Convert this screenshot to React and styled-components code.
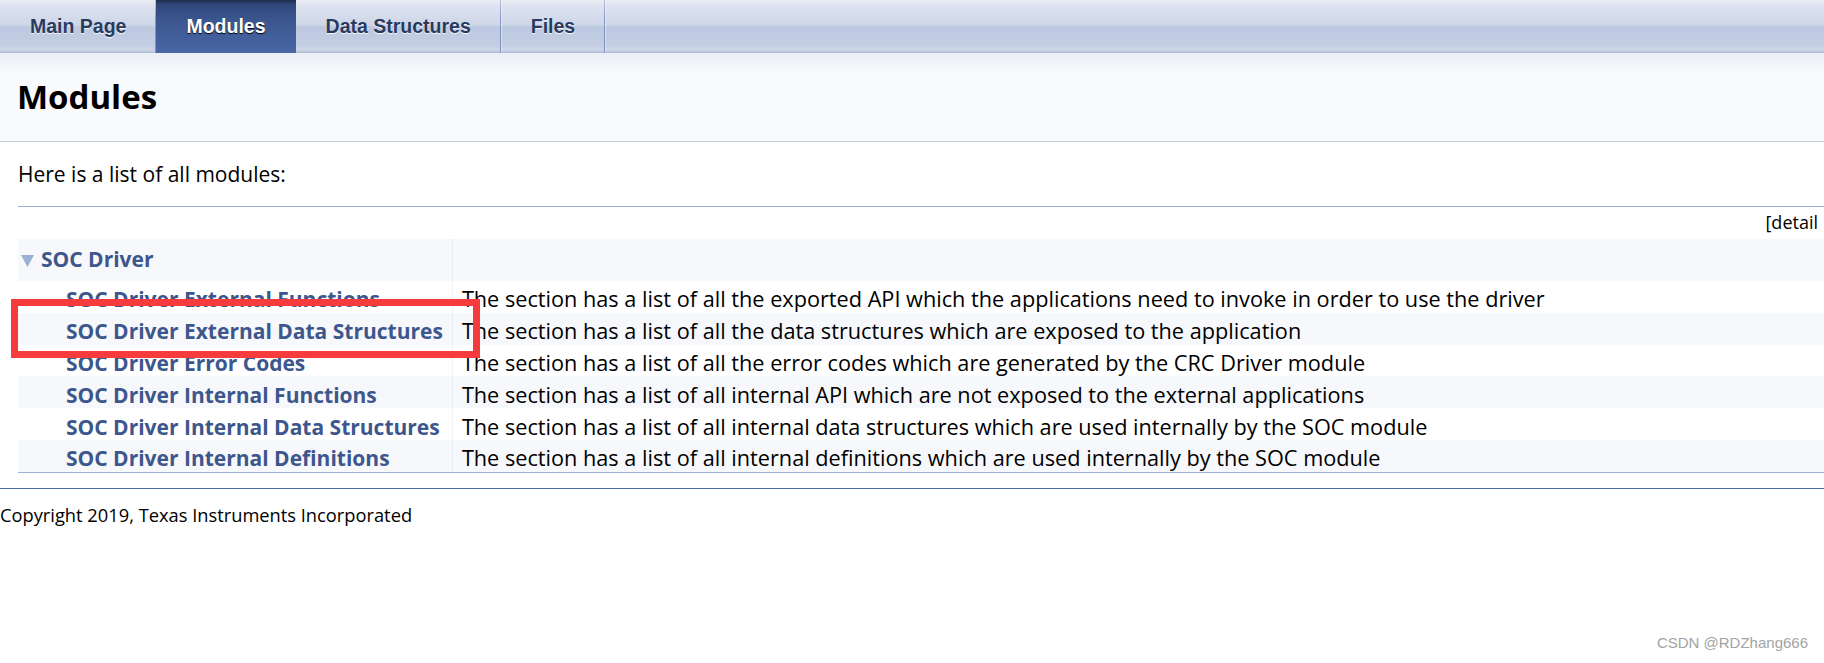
import styled, { createGlobalStyle } from "styled-components";

const GlobalStyle = createGlobalStyle`
  html, body {
    margin: 0;
    padding: 0;
    background: #fff;
  }
  body {
    font-family: "Open Sans", "Noto Sans", sans-serif;
    color: #000;
    overflow: hidden;
  }
`;

const tabs = [
  { label: "Main Page" },
  { label: "Modules", active: true },
  { label: "Data Structures" },
  { label: "Files" },
];

const modules = [
  {
    name: "SOC Driver External Functions",
    desc: "The section has a list of all the exported API which the applications need to invoke in order to use the driver",
  },
  {
    name: "SOC Driver External Data Structures",
    desc: "The section has a list of all the data structures which are exposed to the application",
  },
  {
    name: "SOC Driver Error Codes",
    desc: "The section has a list of all the error codes which are generated by the CRC Driver module",
  },
  {
    name: "SOC Driver Internal Functions",
    desc: "The section has a list of all internal API which are not exposed to the external applications",
  },
  {
    name: "SOC Driver Internal Data Structures",
    desc: "The section has a list of all internal data structures which are used internally by the SOC module",
  },
  {
    name: "SOC Driver Internal Definitions",
    desc: "The section has a list of all internal definitions which are used internally by the SOC module",
  },
];

const App = () => {
  return (
    <Page>
      <GlobalStyle />

      {/* top navigation tabs */}
      <TabBar>
        {tabs.map((t) => (
          <Tab key={t.label} $active={t.active}>
            {t.label}
          </Tab>
        ))}
      </TabBar>

      <Header>
        <Title>Modules</Title>
      </Header>

      <Contents>
        <Intro>Here is a list of all modules:</Intro>
        <Directory>
          <Levels>[detail</Levels>
          <DirTable>
            <tbody>
              <Row $height={42} $even>
                <EntryCell $indent={3} $shift={0}>
                  <EntryInner>
                    <Arrow viewBox="0 0 13 13" width="13" height="13">
                      <polygon points="0,1 13,1 6.5,13" fill="#9CAFD4" />
                    </Arrow>
                    <EntryLink>SOC Driver</EntryLink>
                  </EntryInner>
                </EntryCell>
                <DescCell />
              </Row>
              {modules.map((m, i) => (
                <Row key={m.name} $height={31.8} $even={i % 2 === 1}>
                  <EntryCell $indent={48} $shift={5}>
                    <EntryLink>{m.name}</EntryLink>
                  </EntryCell>
                  <DescCell $shift={5}>{m.desc}</DescCell>
                </Row>
              ))}
            </tbody>
          </DirTable>
        </Directory>
      </Contents>

      <FooterRule />
      <Copyright>Copyright 2019, Texas Instruments Incorporated</Copyright>

      {/* annotation drawn over the screenshot */}
      <Highlight />
      <Watermark>CSDN @RDZhang666</Watermark>
    </Page>
  );
};

export default App;

const Page = styled.div`
  position: relative;
  height: 663px;
  overflow: hidden;
`;

const TabBar = styled.div`
  display: flex;
  height: 53px;
  background: linear-gradient(
    to bottom,
    #e9ecf4 0%,
    #dde3ef 12%,
    #cdd5e7 48%,
    #bdc9e1 50%,
    #c3cde3 85%,
    #cfd7e8 94%,
    #aebbd7 100%
  );
`;

const Tab = styled.div`
  position: relative;
  padding: 0 30px;
  line-height: 53px;
  font-family: "Liberation Sans", Arial, sans-serif;
  font-weight: 700;
  font-size: 19.5px;
  color: ${(p) => (p.$active ? "#fff" : "#283A5D")};
  text-shadow: ${(p) =>
    p.$active ? "0 1px 1px rgba(0,0,0,1)" : "0 1px 1px rgba(255,255,255,0.9)"};
  background: ${(p) =>
    p.$active
      ? "linear-gradient(to bottom, #1f2c4a 0%, #30477a 8%, #3c5790 40%, #4867a5 100%)"
      : "transparent"};

  &::after {
    content: "";
    display: ${(p) => (p.$active ? "none" : "block")};
    position: absolute;
    right: 0;
    top: 0;
    bottom: 0;
    width: 1px;
    background: linear-gradient(to bottom, #b7c2dc 0%, #8597c2 35%, #7b8fbe 100%);
    box-shadow: 1px 0 0 rgba(255, 255, 255, 0.35);
  }
`;

const Header = styled.div`
  height: 89px;
  box-sizing: border-box;
  display: flex;
  align-items: center;
  padding-left: 17px;
  background: linear-gradient(to bottom, #eaeef6 0px, #f9fafc 20px) #f9fafc;
  border-bottom: 1px solid #c4cfe5;
`;

const Title = styled.div`
  font-size: 33px;
  font-weight: 700;
  line-height: 40px;
`;

const Contents = styled.div`
  margin-left: 18px;
`;

const Intro = styled.div`
  margin-top: 18px;
  font-size: 21px;
  line-height: 28px;
`;

const Directory = styled.div`
  margin-top: 18px;
  border-top: 1px solid #9cafd4;
  border-bottom: 1px solid #9cafd4;
`;

const Levels = styled.div`
  text-align: right;
  font-size: 18px;
  line-height: 24px;
  padding: 3px 6px 5px 0;
  white-space: nowrap;
`;

const DirTable = styled.table`
  width: 100%;
  border-collapse: collapse;
  font-size: 21px;
  line-height: 24px;
`;

const Row = styled.tr`
  height: ${(p) => p.$height}px;
  background: ${(p) => (p.$even ? "#F7F8FB" : "#fff")};
`;

const EntryCell = styled.td`
  box-sizing: border-box;
  width: 434px;
  min-width: 434px;
  white-space: nowrap;
  padding: ${(p) => p.$shift}px 9px 0 ${(p) => p.$indent}px;
  vertical-align: middle;
`;

const EntryInner = styled.div`
  display: flex;
  align-items: center;
  padding-bottom: 3px;
`;

const Arrow = styled.svg`
  display: block;
  width: 13px;
  height: 13px;
  margin-right: 7px;
  margin-top: 4px;
`;

const EntryLink = styled.span`
  color: #3d578c;
  font-weight: 700;
`;

const DescCell = styled.td`
  border-left: 1px solid rgba(0, 0, 0, 0.05);
  padding: ${(p) => p.$shift || 0}px 9px 0;
  font-size: 21.7px;
  white-space: nowrap;
  vertical-align: middle;
`;

const FooterRule = styled.hr`
  height: 0;
  border: none;
  border-top: 1px solid #4a6aaa;
  margin: 15px 0 0;
`;

const Copyright = styled.div`
  margin-top: 14px;
  font-size: 18.3px;
  line-height: 24px;
`;

const Highlight = styled.div`
  position: absolute;
  left: 11px;
  top: 299px;
  width: 469px;
  height: 59px;
  box-sizing: border-box;
  border: 7.5px solid #f53b3b;
`;

const Watermark = styled.div`
  position: absolute;
  right: 16px;
  bottom: 11px;
  font-family: "Liberation Sans", Arial, sans-serif;
  font-size: 15px;
  line-height: 18px;
  color: #a3a3a3;
`;
